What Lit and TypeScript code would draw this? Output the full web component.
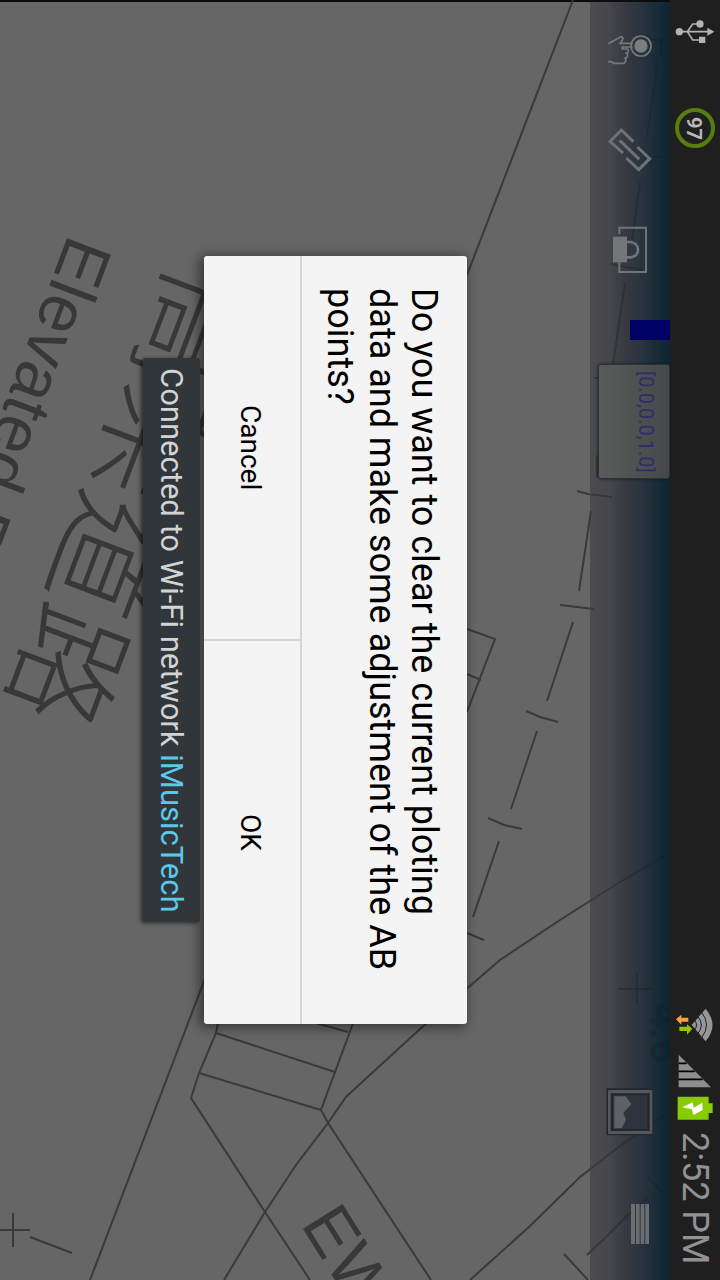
import { LitElement, html, svg, css } from "lit";
import { customElement, property } from "lit/decorators.js";

/** Strokes of the survey sheet. */
const MAP_LINES = [
  "M573 0 467 275",
  "M661 41 V56 M658 58 647 137 M640 182 632 240 M625 283 613 365",
  "M650 40H665 M652 157H662 M610 264 643 270 M594 378H602 M597 455V478",
  "M577 491 588 494 612 497 M591 511 579 591",
  "M560 605 594 609 M573 622 547 701",
  "M526 711 540 717 558 722 M537 731 511 809",
  "M488 818 504 825 522 829 M499 841 473 917 M467 933 484 940",
  "M467 629 495 639 467 712 M467 674 481 680",
  "M665 856 620 882 560 920 500 960 420 1029 372 1073 346 1097 328 1123 296 1165 265 1212 224 1280",
  "M618 989H653 M637 973V1005",
  "M206 976 90 1280",
  "M219 1018 216 1033 199 1073 191 1098 265 1212 310 1280",
  "M216 1033 335 1072 M199 1073 321 1110",
  "M355 1018 321 1110 328 1123 431 1280 M316 1023 348 1032",
  "M13 1213V1247 M0 1230H30 M30 1237 72 1253",
  "M664 1115 620 1146 580 1177 530 1226 470 1280",
  "M648 1198 628 1215 605 1238 587 1255 M648 1177 665 1195 M564 1254 588 1280",
];

@customElement("survey-map")
class SurveyMap extends LitElement {
  static styles = css`
    :host { display: block; writing-mode: horizontal-tb; }
    .sheet { display: block; width: 100%; height: 100%; }
    .line { fill: none; stroke: #3a3a3a; stroke-width: 2; }
    .label {
      fill: #383838;
      font-family: "Liberation Sans", Arial, sans-serif;
    }
    .han {
      fill: #383838;
      font-family: "Noto Sans CJK TC", sans-serif;
      font-weight: 300;
    }
  `;
  render() {
    return html`<svg class="sheet" viewBox="0 0 670 1280" preserveAspectRatio="xMaxYMin slice" lang="zh-Hant">
      ${MAP_LINES.map((d) => svg`<path class="line" d=${d} />`)}
      <text class="label" font-size="68" transform="translate(69 233) rotate(110.7)">Elevated Road</text>
      <text class="han" font-size="118" transform="translate(173 265) rotate(110.7)">高架道路</text>
      <text class="label" font-size="68" transform="translate(300 1224) rotate(58)">EW</text>
      <text class="label" font-size="44" font-weight="bold" transform="translate(650 1003) rotate(90)">4.6</text>
    </svg>`;
  }
}

@customElement("status-bar")
class StatusBar extends LitElement {
  @property() level = "97";
  @property() time = "2:52 PM";
  static styles = css`
    :host {
      display: flex;
      align-items: center;
      box-sizing: border-box;
      block-size: 50px;
      padding-inline: 18px 16px;
      background: #1f1f1f;
      color: #929292;
    }
    svg { display: block; flex: none; }
    .level {
      display: grid;
      place-items: center;
      box-sizing: border-box;
      inline-size: 40px;
      block-size: 40px;
      margin-inline-start: 62px;
      padding-block-start: 2px;
      border: 4px solid #587c10;
      border-radius: 50%;
      font: bold 20px/24px Roboto, sans-serif;
      color: #b8b8b8;
    }
    .tray { display: flex; align-items: center; gap: 12px; margin-inline-start: auto; }
    .tray .cell { display: flex; gap: 8px; align-items: center; }
    .time { font: 36px/44px Roboto, sans-serif; white-space: nowrap; }
  `;
  render() {
    return html`
      <svg width="40" height="28" viewBox="285 55 120 84" role="img" aria-label="USB connected">
        <g fill="none" stroke="#b4b4b4" stroke-width="5">
          <path d="M298 96H386M322 96 338 73H360M322 96 338 121H362" />
        </g>
        <g fill="#b4b4b4">
          <circle cx="298" cy="96" r="11" /><circle cx="360" cy="73" r="11" />
          <path d="M357 111h19v19h-19zM382 84 403 96 382 108z" />
        </g>
      </svg>
      <div class="level">${this.level}</div>
      <div class="tray">
        <div class="cell">
          <svg width="40" height="34" viewBox="287 142 120 102" role="img" aria-label="Wi-Fi">
            <path fill="#969696" d="M337 193 379 144Q420 193 379 242Z" />
            <g fill="none" stroke="#1f1f1f" stroke-width="3">
              <path d="M346 179Q357 193 346 207M356 168Q376 193 356 218M367 155Q396 193 367 231" />
            </g>
            <path fill="#ffa040" d="M290 176 306 162V171H327V183H306V192Z" />
            <path fill="#8cc800" d="M339 204 323 191V198H300V211H323V222Z" />
          </svg>
        </div>
        <div class="cell">
          <svg width="34" height="34" viewBox="292 284 102 102" role="img" aria-label="Signal strength">
            <path fill="#8e8e8e" d="M294 286 391 384H294z" />
            <path stroke="#000" stroke-width="5" d="M294 312H318M294 336H342M294 360H366" />
          </svg>
          <svg width="36" height="24" viewBox="292 412 108 72" role="img" aria-label="Battery charging">
            <path fill="#86cc00" d="M294 414H387V434H399V463H387V483H294z" />
            <path fill="#fff" d="M308 446 339 431 342 447 368 432 369 454 341 469 337 452z" />
          </svg>
        </div>
        <div class="time">${this.time}</div>
      </div>`;
  }
}

@customElement("action-bar")
class ActionBar extends LitElement {
  @property() reading = "[0.0,0.0,1.0]";
  static styles = css`
    :host {
      display: flex;
      align-items: center;
      block-size: 80px;
      background: linear-gradient(to left, rgba(5, 33, 49, 0.94), rgba(18, 37, 51, 0.88) 20%, rgba(30, 41, 54, 0.82) 38%, rgba(39, 42, 53, 0.76) 54%, rgba(52, 52, 60, 0.64) 76%, rgba(60, 57, 63, 0.6));
    }
    button {
      writing-mode: inherit;
      flex: none;
      display: flex;
      align-items: center;
      justify-content: center;
      block-size: 100%;
      margin: 0;
      padding: 0;
      border: 0;
      background: none;
    }
    svg { display: block; flex: none; }
    .tool { inline-size: 100px; }
    .menu { inline-size: 112px; }
    .marker {
      flex: none;
      align-self: flex-start;
      inline-size: 20px;
      block-size: 40px;
      margin-inline: 20px 24px;
      background: #000064;
    }
    .reading {
      align-items: flex-start;
      align-self: flex-start;
      box-sizing: border-box;
      inline-size: 115px;
      block-size: 72px;
      padding-block-start: 10px;
      border: 1px solid #2c3133;
      border-radius: 3px;
      background: linear-gradient(to left, #454849, #505252 50%, #5a5b5b);
      box-shadow: 0 0 3px #15191c;
      font: 20px/26px Roboto, sans-serif;
      color: #352a6c;
    }
    .spacer { flex: 1; }
  `;
  render() {
    return html`
      <button class="tool" aria-label="Touch">
        <svg width="46" height="34" viewBox="81 99 138 102">
          <circle cx="183" cy="138" r="20" fill="#7b7e81" />
          <g fill="none" stroke="#777a7e" stroke-width="5">
            <circle cx="183" cy="138" r="30" />
            <path d="M85 131 121 111Q128 110 129 116L121 130H158M158 141H127V147H142Q148 150 142 159H135M142 160Q145 172 136 174H131M138 175Q136 190 131 190H101L94 185H84" />
          </g>
        </svg>
      </button>
      <button class="tool" aria-label="Link">
        <svg width="46" height="46" viewBox="81 381 138 138">
          <path fill="none" stroke="#6e7174" stroke-width="9" d="M129 459 90 424 124 390 160 425M172 441 209 476 176 509 139 474M119 421 178 478" />
        </svg>
      </button>
      <button class="tool" aria-label="Lock">
        <svg width="36" height="48" viewBox="96 680 108 144">
          <path fill="#747678" d="M99 712H141V789H99z" />
          <path fill="none" stroke="#717477" stroke-width="6" d="M118 704V685H198V818H118V789" />
          <path fill="none" stroke="#717477" stroke-width="8" d="M141 728H152Q174 732 174 751T152 774H141" />
        </svg>
      </button>
      <span class="marker"></span>
      <button class="reading">${this.reading}</button>
      <span class="spacer"></span>
      <button class="menu" aria-label="Picture">
        <svg width="48" height="48" viewBox="78 383 144 144">
          <path fill="#25292d" d="M79 384H221V525H79z" />
          <path fill="#55585b" d="M84 389H217V521H84z" />
          <path fill="#22272c" d="M92 399H209V512H92z" />
          <path fill="#2e343d" d="M99 405H202V506H99z" />
          <path fill="#5f6164" d="M103 408H137L154 432 130 458 138 479 125 504H103z" />
        </svg>
      </button>
      <button class="menu" aria-label="More options">
        <svg width="40" height="40" viewBox="90 732 120 120">
          <path fill="#6b6e70" d="M153 732h12v120h-12zM168 732h11v120h-11zM182 732h11v120h-11zM196 732h11v120h-11z" />
        </svg>
      </button>`;
  }
}

@customElement("app-root")
class AppRoot extends LitElement {
  static styles = css`
    :host {
      display: flex;
      flex-direction: column;
      writing-mode: vertical-rl;
      text-orientation: sideways;
      width: 100%;
      height: 100vh;
      overflow: hidden;
      font-family: Roboto, sans-serif;
      background: #1f1f1f;
    }
    .stage {
      position: relative;
      flex: 1;
      min-block-size: 0;
      background: #666;
      box-shadow: inset 0 2px 0 #0c0c0c;
    }
    .map { position: absolute; inset: 0; z-index: 0; }
    .bar { position: relative; box-shadow: inset 0 2px 0 #0c0c0c; }
    .overlay {
      position: absolute;
      inset: 0;
      display: flex;
      align-items: center;
      justify-content: center;
    }
    .dialog {
      inline-size: 60%;
      border-radius: 3px;
      background: #f4f4f4;
      box-shadow: -3px 2px 12px 2px rgba(0, 0, 0, 0.45);
      color: #000;
      overflow: hidden;
    }
    .message {
      margin: 0;
      padding-block: 22px 17px;
      padding-inline: 32px;
      font-size: 36px;
      line-height: 42px;
    }
    .actions { display: flex; border-block-start: 2px solid #d6d6d6; }
    .actions button {
      writing-mode: inherit;
      flex: 1;
      box-sizing: border-box;
      block-size: 96px;
      margin: 0;
      padding: 0;
      padding-block-start: 4px;
      border: 0;
      background: none;
      font: 28px/32px Roboto, sans-serif;
      color: #000;
    }
    .actions button + button { border-inline-start: 2px solid #d6d6d6; }
    .toast {
      position: absolute;
      inset-block-end: 143px;
      inset-inline: 0;
      display: flex;
      justify-content: center;
    }
    .toast p {
      margin: 0;
      padding-block: 11px;
      padding-inline: 10px;
      border-radius: 3px;
      background: #31363a;
      box-shadow: -2px 1px 4px 0 rgba(0, 0, 0, 0.6);
      font-size: 31px;
      line-height: 35px;
      white-space: nowrap;
      color: #d2d3d3;
    }
    .network { color: #5bc8ea; }
  `;
  render() {
    return html`
      <status-bar></status-bar>
      <main class="stage">
        <survey-map class="map"></survey-map>
        <action-bar class="bar"></action-bar>
        <div class="overlay">
          <section class="dialog" role="alertdialog" aria-labelledby="question">
            <p class="message" id="question">Do you want to clear the current ploting data and make some adjustment of the AB points?</p>
            <div class="actions">
              <button>Cancel</button>
              <button>OK</button>
            </div>
          </section>
        </div>
        <div class="toast" role="status">
          <p>Connected to Wi-Fi network <span class="network">iMusicTech</span></p>
        </div>
      </main>`;
  }
}
